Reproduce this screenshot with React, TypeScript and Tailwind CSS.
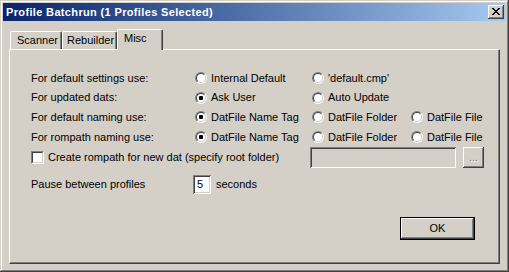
import React from "react";

function Radio({ checked }: { checked?: boolean }) {
  return (
    <span className="flex w-[12px] h-[12px] shrink-0 rounded-full border border-t-[#808080] border-l-[#808080] border-b-white border-r-white">
      <span className="flex w-[10px] h-[10px] items-center justify-center rounded-full border border-t-[#404040] border-l-[#404040] border-b-[#d4d0c8] border-r-[#d4d0c8] bg-white">
        {checked && <span className="block w-[4px] h-[4px] rounded-[1px] bg-black" />}
      </span>
    </span>
  );
}

function RadioOpt({ label, checked, w }: { label: string; checked?: boolean; w: string }) {
  return (
    <div className={`flex items-center gap-[4px] ${w}`}>
      <Radio checked={checked} />
      <span>{label}</span>
    </div>
  );
}

function Row({ label, h, children }: { label: string; h: string; children: React.ReactNode }) {
  return (
    <div className={`flex items-center ${h}`}>
      <span className="w-[164px]">{label}</span>
      {children}
    </div>
  );
}

export default function App() {
  return (
    <div className="w-[509px] h-[272px] bg-[#d4d0c8] p-[3px] flex flex-col text-[11px] leading-[13px] text-black font-['Liberation_Sans',Arial,sans-serif] shadow-[inset_-1px_-1px_#404040,inset_1px_1px_#d4d0c8,inset_-2px_-2px_#808080,inset_2px_2px_#ffffff]">
      {/* Title bar */}
      <div className="h-[18px] flex items-center justify-between pl-[3px] pr-[2px] bg-gradient-to-r from-[#0a246a] to-[#a6caf0]">
        <span className="font-bold text-white tracking-[0.35px]">Profile Batchrun (1 Profiles Selected)</span>
        <div className="w-[16px] h-[14px] bg-[#d4d0c8] flex items-center justify-center shadow-[inset_-1px_-1px_#404040,inset_1px_1px_#ffffff,inset_-2px_-2px_#808080,inset_2px_2px_#d4d0c8]">
          <svg width="8" height="7" viewBox="0 0 8 7" className="mb-[1px]">
            <path d="M0 0h2v1h1v1h2V1h1V0h2v1H7v1H6v1H5v1h1v1h1v1h1v1H6V6H5V5H3v1H2v1H0V6h1V5h1V4h1V3H2V2H1V1H0z" fill="#000" />
          </svg>
        </div>
      </div>

      {/* Body */}
      <div className="flex flex-col pl-[6px] pt-[8px]">
        {/* Tabs */}
        <div className="flex items-end h-[20px] pl-[1px]">
          <div className="w-[52px] h-[18px] pl-[6px] pt-[2px] border-l border-t border-white border-r border-r-[#404040] rounded-tl-[2px] rounded-tr-[2px] shadow-[inset_-1px_0_#808080]">
            Scanner
          </div>
          <div className="w-[55px] h-[18px] pl-[4px] pt-[2px] border-l border-t border-white border-r border-r-[#404040] rounded-tl-[2px] rounded-tr-[2px] shadow-[inset_-1px_0_#808080]">
            Rebuilder
          </div>
          <div className="relative z-10 -mb-px w-[46px] h-[21px] pl-[6px] pt-[2px] bg-[#d4d0c8] border-l border-t border-white border-r border-r-[#404040] rounded-tl-[2px] rounded-tr-[2px] shadow-[inset_-1px_0_#808080]">
            Misc
          </div>
        </div>

        {/* Panel */}
        <div className="w-[491px] h-[215px] border-l border-t border-white border-r border-b border-r-[#404040] border-b-[#404040] shadow-[inset_-1px_-1px_#808080] pl-[21px] pt-[18px] flex flex-col">
          <Row label="For default settings use:" h="h-[20px]">
            <RadioOpt w="w-[117px]" label="Internal Default" />
            <RadioOpt w="w-[99px]" label="'default.cmp'" />
          </Row>
          <Row label="For updated dats:" h="h-[19px]">
            <RadioOpt w="w-[117px]" label="Ask User" checked />
            <RadioOpt w="w-[99px]" label="Auto Update" />
          </Row>
          <Row label="For default naming use:" h="h-[20px]">
            <RadioOpt w="w-[117px]" label="DatFile Name Tag" checked />
            <RadioOpt w="w-[99px]" label="DatFile Folder" />
            <RadioOpt w="w-[80px]" label="DatFile File" />
          </Row>
          <Row label="For rompath naming use:" h="h-[20px]">
            <RadioOpt w="w-[117px]" label="DatFile Name Tag" checked />
            <RadioOpt w="w-[99px]" label="DatFile Folder" />
            <RadioOpt w="w-[80px]" label="DatFile File" />
          </Row>

          <div className="flex items-center h-[21px]">
            <div className="flex items-center gap-[4px] w-[279px]">
              <span className="flex w-[13px] h-[13px] shrink-0 border border-t-[#808080] border-l-[#808080] border-b-white border-r-white">
                <span className="w-[11px] h-[11px] border border-t-[#404040] border-l-[#404040] border-b-[#d4d0c8] border-r-[#d4d0c8] bg-white" />
              </span>
              <span>Create rompath for new dat (specify root folder)</span>
            </div>
            <div className="w-[146px] h-[21px] bg-[#d4d0c8] shadow-[inset_1px_1px_#808080,inset_-1px_-1px_#ffffff,inset_2px_2px_#404040,inset_-2px_-2px_#d4d0c8]" />
            <div className="ml-[7px] w-[21px] h-[21px] flex items-end justify-center pb-[4px] text-[#808080] [text-shadow:1px_1px_#ffffff] shadow-[inset_-1px_-1px_#404040,inset_1px_1px_#ffffff,inset_-2px_-2px_#808080,inset_2px_2px_#d4d0c8]">
              ...
            </div>
          </div>

          <div className="flex items-center h-[19px] mt-[7px]">
            <span className="w-[162px]">Pause between profiles</span>
            <div className="w-[18px] h-[19px] bg-white flex items-center pl-[4px] shadow-[inset_1px_1px_#808080,inset_-1px_-1px_#ffffff,inset_2px_2px_#404040,inset_-2px_-2px_#d4d0c8]">
              5
            </div>
            <span className="ml-[5px]">seconds</span>
          </div>

          <div className="mt-[23px] ml-[369px] w-[75px] h-[23px] border border-black flex items-center justify-center shadow-[inset_-1px_-1px_#404040,inset_1px_1px_#ffffff,inset_-2px_-2px_#808080]">
            OK
          </div>
        </div>
      </div>
    </div>
  );
}
